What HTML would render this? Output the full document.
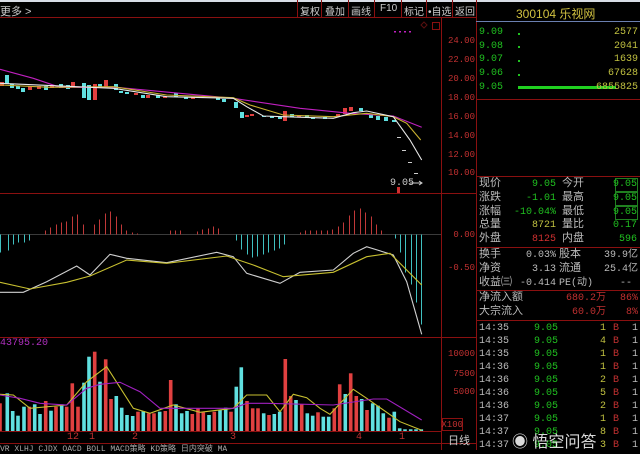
<!DOCTYPE html>
<html><head><meta charset="utf-8"><style>
body{margin:0;background:#000;width:640px;height:450px;overflow:hidden;font-family:"Liberation Sans","Noto Sans CJK SC",sans-serif}
svg{position:absolute;left:0;top:0}
.p{position:absolute;font-size:11px;white-space:nowrap}
.m{font-family:"Liberation Mono","Noto Sans CJK SC",monospace}
.ax div{position:absolute;right:0;text-align:right}
.rp div{position:absolute;white-space:nowrap}
.r{text-align:right}
</style></head><body>
<svg width="640" height="450" id="s">
<rect x="0" y="0" width="640" height="2" fill="#d8dde6"/>
<g stroke="#8a1010" stroke-width="1" fill="none">
<line x1="0" y1="17.5" x2="476" y2="17.5"/>
<line x1="441.5" y1="17" x2="441.5" y2="450"/>
<line x1="476.5" y1="0" x2="476.5" y2="450"/>
<line x1="0" y1="193.5" x2="476" y2="193.5"/>
<line x1="0" y1="337.5" x2="476" y2="337.5"/>
<line x1="0" y1="431.5" x2="441" y2="431.5"/>
<line x1="0" y1="443.5" x2="476" y2="443.5"/>
<line x1="297.5" y1="0" x2="297.5" y2="17"/><line x1="321.5" y1="0" x2="321.5" y2="17"/><line x1="348.5" y1="0" x2="348.5" y2="17"/><line x1="374.5" y1="0" x2="374.5" y2="17"/><line x1="401.5" y1="0" x2="401.5" y2="17"/><line x1="426.5" y1="0" x2="426.5" y2="17"/><line x1="452.5" y1="0" x2="452.5" y2="17"/>
<line x1="476" y1="99.5" x2="640" y2="99.5"/>
<line x1="476" y1="176.5" x2="640" y2="176.5"/>
<line x1="476" y1="247.5" x2="640" y2="247.5"/>
<line x1="476" y1="290.5" x2="640" y2="290.5"/>
<line x1="476" y1="320.5" x2="640" y2="320.5"/>
</g>
<line x1="476" y1="21.5" x2="640" y2="21.5" stroke="#6a7fb0"/>
<line x1="0" y1="234.5" x2="441" y2="234.5" stroke="#777" stroke-width="0.6"/>
<g id="dyn"></g>
<g fill="none" stroke-width="1.1">
<polyline id="pp" stroke="#c020c0"/>
<polyline id="py" stroke="#c8b030"/>
<polyline id="pw" stroke="#e8e8e8"/>
<polyline id="mw" stroke="#d0d0d0"/>
<polyline id="my" stroke="#c8c030"/>
<polyline id="vy" stroke="#c8c030"/>
<polyline id="vp" stroke="#a020c0"/>
</g>
<rect x="518" y="86" width="98" height="3" fill="#20d020"/>
<g fill="#20c020"><rect x="518" y="33" width="2" height="2"/><rect x="518" y="46" width="2" height="2"/><rect x="518" y="60" width="2" height="2"/><rect x="518" y="74" width="2" height="2"/></g>
<g fill="none" stroke="#208020"><rect x="615.5" y="178.5" width="22" height="13"/><rect x="615.5" y="192.5" width="22" height="13"/><rect x="615.5" y="206.5" width="22" height="13"/></g>
<g fill="#c020c0"><rect x="394" y="31" width="2" height="1.5"/><rect x="399" y="31" width="2" height="1.5"/><rect x="404" y="31" width="2" height="1.5"/><rect x="409" y="31" width="2" height="1.5"/></g>
<rect x="432.5" y="22.5" width="7" height="7" fill="none" stroke="#8a1010"/>
<path d="M424 22l3 3-3 3-3-3z" fill="none" stroke="#5a1010"/>
<line x1="410" y1="183" x2="422" y2="183" stroke="#ccc"/><path d="M419 181l3 2-3 2" fill="none" stroke="#ccc"/>
<rect x="397" y="187" width="3" height="6" fill="#d03030"/>
<rect x="442.5" y="418.5" width="20" height="12" fill="none" stroke="#8a1010"/>
</svg>

<div class="p" style="left:0;top:3px;color:#ccc">更多 &gt;</div>
<div class="p" style="left:300px;top:3px;color:#ccc;font-size:10px">复权</div>
<div class="p" style="left:325px;top:3px;color:#ccc;font-size:10px">叠加</div>
<div class="p" style="left:351px;top:3px;color:#ccc;font-size:10px">画线</div>
<div class="p" style="left:380px;top:3px;color:#ccc;font-size:10px">F10</div>
<div class="p" style="left:404px;top:3px;color:#ccc;font-size:10px">标记</div>
<div class="p" style="left:428px;top:3px;color:#ccc;font-size:10px">•自选</div>
<div class="p" style="left:455px;top:3px;color:#ccc;font-size:10px">返回</div>

<div class="m ax" style="position:absolute;left:443px;width:32px;top:0;color:#c03030;font-size:9px;line-height:1">
<div style="top:37px">24.00</div>
<div style="top:56px">22.00</div>
<div style="top:75px">20.00</div>
<div style="top:94px">18.00</div>
<div style="top:113px">16.00</div>
<div style="top:132px">14.00</div>
<div style="top:151px">12.00</div>
<div style="top:169px">10.00</div>
<div style="top:231px">0.00</div>
<div style="top:264px">-0.50</div>
<div style="top:350px">10000</div>
<div style="top:370px">7500</div>
<div style="top:388px">5000</div>
<div style="top:421px;right:12px">X100</div>
</div>
<div class="p" style="left:448px;top:432px;color:#ccc">日线</div>
<div class="p m" style="left:390px;top:178px;color:#ccc;font-size:10px">9.05</div>
<div class="p m" style="left:0;top:338px;color:#b030c0;font-size:10px">43795.20</div>
<div class="p m" style="left:0;top:432px;color:#c03030;font-size:10px">
<span style="position:absolute;left:67px">12</span><span style="position:absolute;left:89px">1</span><span style="position:absolute;left:132px">2</span><span style="position:absolute;left:230px">3</span><span style="position:absolute;left:356px">4</span><span style="position:absolute;left:399px">1</span></div>
<div class="p m" style="left:0;top:443px;color:#aaa;font-size:8px">VR  XLHJ  CJDX  OACD  BOLL  MACD策略  KD策略  日内突破  MA</div>

<div class="p" style="left:516px;top:5px;color:#d0c040;font-size:12px">300104 乐视网</div>
<div class="m rp" style="position:absolute;left:479px;top:0;width:159px;font-size:10px;line-height:1">
<div style="top:28px;color:#20c020">9.09</div><div style="top:28px;right:0;color:#c0c040">2577</div>
<div style="top:42px;color:#20c020">9.08</div><div style="top:42px;right:0;color:#c0c040">2041</div>
<div style="top:55px;color:#20c020">9.07</div><div style="top:55px;right:0;color:#c0c040">1639</div>
<div style="top:69px;color:#20c020">9.06</div><div style="top:69px;right:0;color:#c0c040">67628</div>
<div style="top:83px;color:#20c020">9.05</div><div style="top:83px;right:0;color:#c0c040">6855825</div>
</div>
<div class="m rp" style="position:absolute;left:479px;top:0;width:159px;font-size:10px;line-height:1;color:#bbb">
<div style="top:179px;font-size:11px">现价</div><div style="top:180px;right:82px;color:#20c020">9.05</div><div style="top:179px;left:83px;font-size:11px">今开</div><div style="top:180px;right:1px;color:#20c020">9.05</div>
<div style="top:193px;font-size:11px">涨跌</div><div style="top:194px;right:82px;color:#20c020">-1.01</div><div style="top:193px;left:83px;font-size:11px">最高</div><div style="top:194px;right:1px;color:#20c020">9.05</div>
<div style="top:207px;font-size:11px">涨幅</div><div style="top:208px;right:82px;color:#20c020">-10.04%</div><div style="top:207px;left:83px;font-size:11px">最低</div><div style="top:208px;right:1px;color:#20c020">9.05</div>
<div style="top:220px;font-size:11px">总量</div><div style="top:221px;right:82px;color:#c0c040">8721</div><div style="top:220px;left:83px;font-size:11px">量比</div><div style="top:221px;right:1px;color:#20c020">0.17</div>
<div style="top:234px;font-size:11px">外盘</div><div style="top:235px;right:82px;color:#d03030">8125</div><div style="top:234px;left:83px;font-size:11px">内盘</div><div style="top:235px;right:1px;color:#20c020">596</div>
<div style="top:250px;font-size:11px">换手</div><div style="top:251px;right:82px">0.03%</div><div style="top:250px;left:80px;font-size:11px">股本</div><div style="top:251px;right:0">39.9亿</div>
<div style="top:264px;font-size:11px">净资</div><div style="top:265px;right:82px">3.13</div><div style="top:264px;left:80px;font-size:11px">流通</div><div style="top:265px;right:0">25.4亿</div>
<div style="top:278px;font-size:11px">收益㈢</div><div style="top:279px;right:82px">-0.414</div><div style="top:279px;left:80px">PE(动)</div><div style="top:279px;right:6px">--</div>
<div style="top:293px;font-size:11px">净流入额</div><div style="top:294px;right:32px;color:#c03030">680.2万</div><div style="top:294px;right:0;color:#c03030">86%</div>
<div style="top:307px;font-size:11px">大宗流入</div><div style="top:308px;right:32px;color:#c03030">60.0万</div><div style="top:308px;right:0;color:#c03030">8%</div>
</div>
<div class="m rp" id="tr" style="position:absolute;left:479px;top:0;width:159px;font-size:10px;line-height:1"></div>
<div class="p" style="left:512px;top:428px;font-size:16px;color:#fff;opacity:.85">◉ 悟空问答</div>

<script>
function P(id,pts,ox,oy){document.getElementById(id).setAttribute('points',pts.map(p=>(ox+p[0]/3).toFixed(1)+','+(oy+p[1]/3).toFixed(1)).join(' '))}
P('pp',[[0,208],[100,235],[180,262],[350,262],[520,278],[700,295],[900,325],[1050,340],[1180,348],[1265,382]],0,0);
P('py',[[0,255],[150,262],[340,260],[500,285],[700,293],[750,315],[850,345],[1000,350],[1100,340],[1180,350],[1220,370],[1262,420]],0,0);
P('pw',[[0,250],[340,265],[500,290],[700,295],[740,320],[790,348],[850,350],[1000,355],[1060,338],[1100,333],[1180,350],[1230,420],[1265,480]],0,0);
P('mw',[[0,292],[70,292],[140,260],[230,213],[270,240],[330,178],[380,190],[500,203],[650,172],[700,185],[740,235],[840,265],[900,232],[1000,225],[1060,175],[1100,155],[1180,180],[1220,260],[1265,418]],0,195);
P('my',[[0,262],[90,282],[200,262],[270,243],[380,195],[500,205],[680,183],[760,210],[850,245],[1000,232],[1100,185],[1170,175],[1265,270]],0,195);
P('vy',[[0,598],[40,600],[90,640],[200,630],[260,560],[320,515],[400,640],[450,655],[520,630],[600,652],[700,640],[740,600],[800,600],[840,650],[880,598],[920,608],[960,640],[990,658],[1060,583],[1100,610],[1200,680],[1265,706]],0,195);
P('vp',[[0,600],[60,610],[120,625],[200,630],[260,580],[300,568],[360,562],[420,590],[480,640],[600,640],[700,640],[740,625],[800,625],[1000,630],[1120,612],[1160,612],[1265,675]],0,195);
var R='#e04040',C='#60e0e0',h='',g=document.getElementById('dyn');
var v="0r625,22c595,38c648,54c662,72c635,88r635,104c628,120c657,137r618,153c647,168r635,185c628,200r635,217r565,234r635,252c563,267c485,284r470,300c560,317r493,333r612,349c603,365c638,381c660,398c663,414r650,430c648,446r655,462r655,479c650,496r648,512r555,528c628,545c655,561c648,577r657,594r640,610r652,627c660,643r650,660c645,677c638,693r650,709c575,724c517,741r618,758r640,774r640,791c655,807r660,823c657,839c650,856r492,872r603,888c615,905r628,922c655,938c662,954r652,970c665,986c665,1003r640,1019r568,1036c597,1052r535,1069r603,1085c612,1101r645,1118c625,1134c632,1150c655,1167r668,1183c650,1199c700,1215c703,1232c703,1248c703,1264c703".split(',');
v.forEach(s=>{var m=s.match(/(\d+)([rc])(\d+)/);var x=m[1]/3,y=195+m[3]/3;h+='<rect x="'+(x-1.8).toFixed(1)+'" y="'+y.toFixed(1)+'" width="3.6" height="'+(431-y).toFixed(1)+'" fill="'+(m[2]=='r'?R:C)+'"/>'});
var mh=[[0,-18],[8,-16],[13,-10],[18,-8],[24,-8],[29,-6],[45,4],[50,7],[56,10],[61,12],[66,13],[72,18],[77,20],[83,10],[94,10],[99,15],[105,21],[110,23],[116,18],[121,10],[126,4],[132,2],[137,1],[170,4],[175,4],[180,4],[197,3],[202,5],[208,6],[213,8],[218,6],[236,-6],[241,-15],[247,-20],[252,-23],[257,-22],[263,-20],[268,-18],[274,-16],[279,-14],[284,-10],[300,2],[305,4],[310,4],[316,4],[321,4],[327,4],[332,5],[338,8],[343,12],[349,19],[354,24],[360,26],[365,22],[371,18],[376,10],[381,4],[395,-4],[400,-18],[405,-38],[411,-50],[416,-68],[421,-90]];
mh.forEach(b=>{var y=b[1]>0?234.5-b[1]:234.5;h+='<rect x="'+b[0]+'" y="'+y+'" width="1" height="'+Math.abs(b[1])+'" fill="'+(b[1]>0?'#c03838':'#40c0c0')+'"/>'});
var cd=[[7,75,84,C],[2,82,86,R],[12,84,88,C],[18,86,89,C],[23,88,92,C],[30,86,90,R],[39,86,89,R],[46,86,90,C],[52,85,88,R],[61,84,88,C],[68,85,89,C],[73,82,87,R],[84,83,98,C],[89,85,100,C],[95,84,100,R],[100,84,88,C],[106,80,88,R],[116,84,90,C],[121,91,93,C],[127,92,94,C],[136,93,95,R],[143,95,98,C],[148,95,98,R],[158,95,98,C],[165,96,98,R],[176,93,97,C],[186,97,99,C],[193,97,99,R],[218,97,100,C],[224,99,102,C],[236,102,108,C],[242,112,118,C],[247,115,117,R],[252,114,116,R],[264,116,117,C],[272,116,118,C],[280,117,119,C],[285,111,121,R],[292,114,117,C],[299,115,117,R],[307,115,118,C],[313,117,119,C],[325,117,119,C],[338,114,117,R],[345,108,114,R],[351,107,111,R],[361,108,111,C],[371,114,118,C],[378,116,120,C],[386,117,121,C],[394,120,122,C],[399,137,138,'#ccc'],[404,150,151,'#ccc'],[410,162,163,'#ccc'],[416,173,174,'#ccc']];
cd.forEach(c=>{h+='<rect x="'+(c[0]-2)+'" y="'+c[1]+'" width="4" height="'+Math.max(1,c[2]-c[1])+'" fill="'+c[3]+'"/>'});
g.innerHTML=h;
var t=[["14:35",1],["14:35",4],["14:35",1],["14:36",1],["14:36",2],["14:36",5],["14:36",2],["14:37",1],["14:37",8],["14:37",3]],s='';
t.forEach((r,i)=>{var y=324+i*13;s+='<div style="top:'+y+'px;color:#bbb">'+r[0]+'</div><div style="top:'+y+'px;left:55px;color:#20c020">9.05</div><div style="top:'+y+'px;left:121px;color:#c0c040">'+r[1]+'</div><div style="top:'+y+'px;left:134px;color:#c03030">B</div><div style="top:'+y+'px;right:0;color:#bbb">1</div>'});
document.getElementById('tr').innerHTML=s;
</script>
</body></html>
